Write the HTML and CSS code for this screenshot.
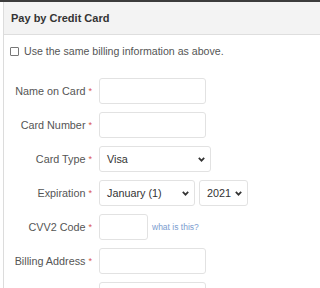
FILE: index.html
```html
<!DOCTYPE html>
<html>
<head>
<meta charset="utf-8">
<link rel="stylesheet" href="styles.css">
</head>
<body>
<div class="topbar"></div>
<div class="panel">
  <div class="panel-head">Pay by Credit Card</div>
  <div class="panel-body">
    <label class="same">
      <input type="checkbox" class="cb">
      <span>Use the same billing information as above.</span>
    </label>
    <div class="form">
      <div class="lbl">Name on Card <span class="req">*</span></div>
      <div class="ctl"><input class="txt w-name" type="text"></div>

      <div class="lbl">Card Number <span class="req">*</span></div>
      <div class="ctl"><input class="txt w-name" type="text"></div>

      <div class="lbl">Card Type <span class="req">*</span></div>
      <div class="ctl">
        <div class="sel w-type"><span>Visa</span>
          <svg class="chev" width="7" height="5" viewBox="0 0 7 5"><path d="M0.8 0.9 L3.5 3.7 L6.2 0.9" fill="none" stroke="#333" stroke-width="1.7"/></svg>
        </div>
      </div>

      <div class="lbl">Expiration <span class="req">*</span></div>
      <div class="ctl">
        <div class="sel w-month"><span>January (1)</span>
          <svg class="chev" width="7" height="5" viewBox="0 0 7 5"><path d="M0.8 0.9 L3.5 3.7 L6.2 0.9" fill="none" stroke="#333" stroke-width="1.7"/></svg>
        </div>
        <div class="sel w-year"><span>2021</span>
          <svg class="chev" width="7" height="5" viewBox="0 0 7 5"><path d="M0.8 0.9 L3.5 3.7 L6.2 0.9" fill="none" stroke="#333" stroke-width="1.7"/></svg>
        </div>
      </div>

      <div class="lbl">CVV2 Code <span class="req">*</span></div>
      <div class="ctl"><input class="txt w-cvv" type="text"><a class="what" href="#">what is this?</a></div>

      <div class="lbl">Billing Address <span class="req">*</span></div>
      <div class="ctl"><input class="txt w-name" type="text"></div>

      <div class="lbl"></div>
      <div class="ctl"><input class="txt w-name" type="text"></div>
    </div>
  </div>
</div>
</body>
</html>
```
FILE: styles.css
```css
html, body {
  margin: 0;
  padding: 0;
  background: #fff;
  overflow: hidden;
}
body {
  font-family: "Liberation Sans", Arial, sans-serif;
  font-size: 11px;
  color: #555;
}
.topbar {
  height: 2px;
  background: #3c3c3c;
}
.panel {
  margin-left: 3px;
  border-left: 1px solid #dcdcdc;
}
.panel-head {
  height: 33px;
  box-sizing: border-box;
  background: #f3f3f3;
  border-bottom: 1px solid #dedede;
  padding-left: 7px;
  display: flex;
  align-items: center;
  font-weight: bold;
  font-size: 11px;
  color: #333;
}
.panel-body {
  padding-top: 9px;
}
.same {
  display: flex;
  align-items: center;
  gap: 5px;
  padding-left: 6px;
  height: 14px;
  font-size: 10.6px;
  color: #555;
}
.cb {
  appearance: none;
  -webkit-appearance: none;
  flex-shrink: 0;
  margin: 0;
  width: 9px;
  height: 9px;
  border: 1px solid #777;
  border-radius: 1px;
  background: #fff;
}
.form {
  margin-top: 20px;
  display: grid;
  grid-template-columns: 88px 1fr;
  column-gap: 7px;
  row-gap: 8px;
}
.lbl {
  height: 26px;
  display: flex;
  align-items: center;
  justify-content: flex-end;
  white-space: nowrap;
  font-size: 10.8px;
  color: #555;
}
.req {
  color: #d9534f;
  font-size: 9px;
  margin-left: 3px;
}
.ctl {
  display: flex;
  align-items: center;
  gap: 4px;
  height: 26px;
}
.txt {
  flex-shrink: 0;
  box-sizing: border-box;
  height: 26px;
  margin: 0;
  border: 1px solid #e2e2e2;
  border-radius: 3px;
  background: #fff;
  padding: 0 6px;
}
.w-name { width: 107px; }
.w-cvv { width: 49px; }
.sel {
  flex-shrink: 0;
  position: relative;
  box-sizing: border-box;
  height: 26px;
  border: 1px solid #e2e2e2;
  border-radius: 3px;
  background: #fff;
  display: flex;
  align-items: center;
  padding-left: 7px;
  font-size: 10.8px;
  color: #333;
}
.w-type { width: 112px; }
.w-month { width: 96px; }
.w-year { width: 49px; }
.chev {
  position: absolute;
  right: 5px;
  top: 10px;
}
.what {
  color: #7b9ccf;
  font-size: 8.5px;
  text-decoration: none;
}
```
